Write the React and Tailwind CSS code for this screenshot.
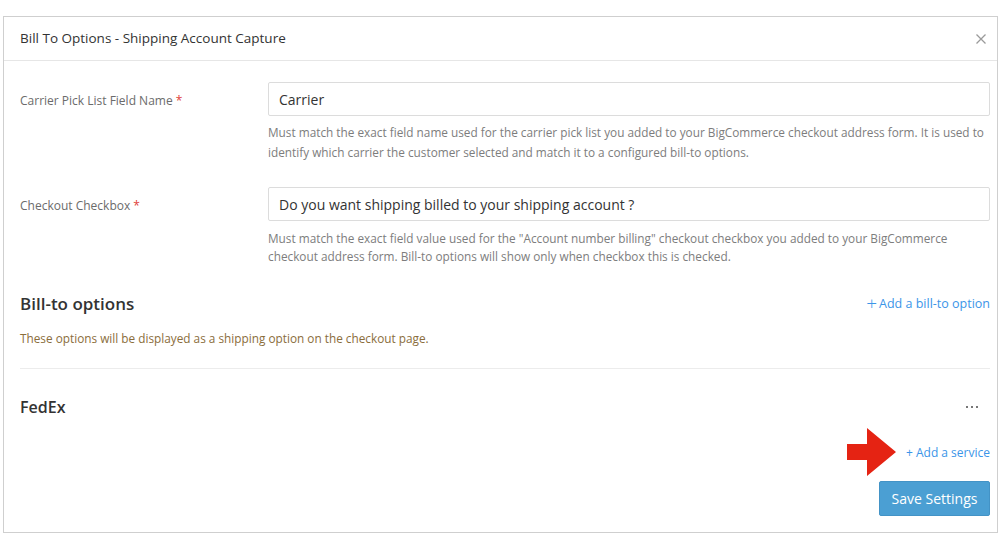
import React from "react";

const font = { fontFamily: '"Open Sans", "Noto Sans", Arial, sans-serif' };

function Field({ label, value, help, helpClass, rowClass }) {
  return (
    <div className={`flex ${rowClass}`}>
      <div className="w-[248px] shrink-0 h-[34px] flex items-center pt-[3px] text-[12px] text-[#6b6b6b]">
        {label}
        <span className="ml-[3px] text-[#e0403a]">*</span>
      </div>
      <div className="flex-1">
        <div className="h-[34px] border border-[#dcdcdc] rounded-[2px] flex items-center px-[10px] text-[14px] text-[#333]">
          {value}
        </div>
        <p className={`text-[11.8px] text-[#7d7d7d] ${helpClass}`}>{help}</p>
      </div>
    </div>
  );
}

export default function App() {
  return (
    <div className="w-[1000px] h-[548px] bg-white pt-[16px] pl-[3px]" style={font}>
      <div className="w-[995px] h-[517px] border border-[#cfcfcf] flex flex-col">
        <div className="h-[44px] shrink-0 border-b border-[#e6e6e6] flex items-center justify-between pl-[16px] pr-[10px]">
          <span className="text-[13.5px] text-[#333] -mt-[1px]">Bill To Options - Shipping Account Capture</span>
          <svg width="12" height="12" viewBox="0 0 12 12">
            <path d="M1.5 1.5 L10.5 10.5 M10.5 1.5 L1.5 10.5" stroke="#9a9a9a" strokeWidth="1.3" />
          </svg>
        </div>

        <div className="flex flex-col pl-[16px] pr-[7px]">
          <Field
            rowClass="mt-[21px]"
            label="Carrier Pick List Field Name"
            value="Carrier"
            helpClass="mt-[6px] leading-[20px]"
            help="Must match the exact field name used for the carrier pick list you added to your BigCommerce checkout address form. It is used to identify which carrier the customer selected and match it to a configured bill-to options."
          />
          <Field
            rowClass="mt-[25px]"
            label="Checkout Checkbox"
            value="Do you want shipping billed to your shipping account ?"
            helpClass="mt-[8px] leading-[18px]"
            help={'Must match the exact field value used for the "Account number billing" checkout checkbox you added to your BigCommerce checkout address form. Bill-to options will show only when checkbox this is checked.'}
          />

          <div className="mt-[27px] flex items-center justify-between h-[24px]">
            <h2 className="text-[17px] font-semibold text-[#333]">Bill-to options</h2>
            <span className="text-[12.5px] text-[#3b95e8] flex items-center">
              <span className="text-[19px] font-light mr-[2px] leading-none -mt-[2px]">+</span>Add a bill-to option
            </span>
          </div>

          <p className="mt-[14px] text-[11.8px] leading-[17px] text-[#8a6d3b]">
            These options will be displayed as a shipping option on the checkout page.
          </p>

          <div className="mt-[21px] border-t border-[#ececec]" />

          <div className="mt-[27px] flex items-center justify-between h-[22px]">
            <h3 className="text-[16px] font-semibold text-[#333]">FedEx</h3>
            <div className="flex gap-[3px] mr-[12px]">
              <span className="w-[2px] h-[2px] bg-[#777]" />
              <span className="w-[2px] h-[2px] bg-[#777]" />
              <span className="w-[2px] h-[2px] bg-[#777]" />
            </div>
          </div>

          <div className="mt-[10px] flex items-center justify-end">
            <svg width="50" height="49" viewBox="0 0 50 49" className="mr-[9px]">
              <polygon points="0,16 20,16 20,0 49,24 20,48 20,32 0,32" fill="#e52313" />
            </svg>
            <span className="text-[12px] text-[#3b95e8]">+ Add a service</span>
          </div>

          <div className="mt-[4px] flex justify-end">
            <button className="w-[111px] h-[35px] bg-[#4b9fd3] rounded-[2px] text-white text-[14px] border border-[#4393c6]">
              Save Settings
            </button>
          </div>
        </div>
      </div>
    </div>
  );
}
